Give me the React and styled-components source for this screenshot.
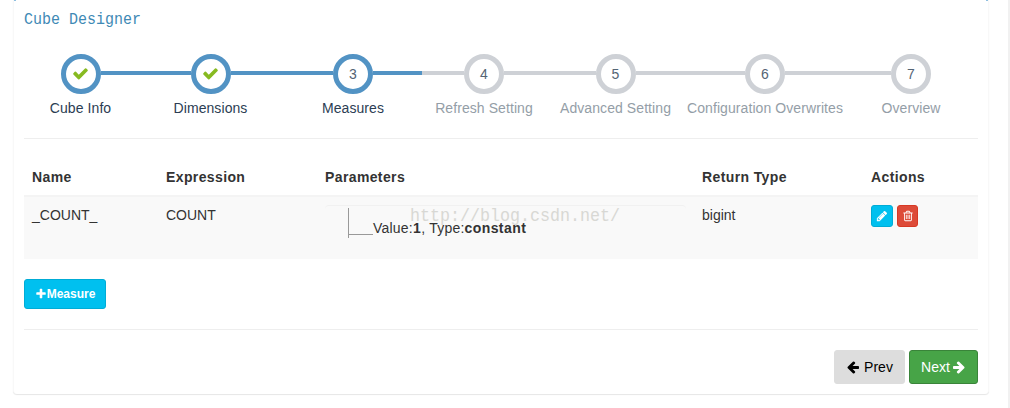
import React from "react";
import styled, { createGlobalStyle } from "styled-components";

const GlobalStyle = createGlobalStyle`
    * {
        box-sizing: border-box;
    }

    body {
        margin: 0;
        background: #fff;
        color: #333;
        font-family: "Liberation Sans", Arial, sans-serif;
        font-size: 14px;
        line-height: 20px;
    }
`;

const Page = styled.div`
    width: 1010px;
    height: 408px;
    padding-left: 13px;
    border-right: 2px solid #f1f1f1;
    overflow: hidden;
`;

/* the blue top border only shows at its two corners */
const Box = styled.div`
    width: 976px;
    height: 394px;
    padding: 0 10px;
    background:
        linear-gradient(#8fbfe0, #8fbfe0) 0 0 / 2px 1px no-repeat,
        linear-gradient(#8fbfe0, #8fbfe0) 100% 0 / 2px 1px no-repeat,
        #fff;
    border: solid #f8f8f8;
    border-width: 0 1px;
    border-radius: 0 0 4px 4px;
    box-shadow: 0 1px 1px rgba(0, 0, 0, 0.1);
`;

const Title = styled.h3`
    margin: 0;
    height: 54px;
    padding-top: 11px;
    color: #4089b5;
    font-family: "Liberation Mono", monospace;
    font-size: 15px;
    font-weight: 400;
    line-height: 20px;

    span {
        display: inline-block;
        transform: scaleY(1.15);
    }
`;

const Steps = styled.ul`
    display: grid;
    grid-template-columns: 113px 147px 138px 124px 139px 160px 132px;
    width: 954px;
    margin: 0;
    padding: 0;
    list-style: none;
`;

const Step = styled.li`
    display: flex;
    flex-direction: column;
    align-items: center;
    color: ${(props) => (props.$active ? "#2b3d53" : "#949ea7")};
    white-space: nowrap;
`;

const Track = styled.div`
    display: flex;
    align-items: center;
    width: 100%;
    height: 40px;
`;

const Line = styled.span`
    flex: 1;
    height: 4px;
    margin-bottom: 2px;
    background: ${(props) => (props.$hidden ? "transparent" : props.$active ? "#5293c4" : "#ced1d6")};
`;

const Circle = styled.span`
    display: flex;
    align-items: center;
    justify-content: center;
    width: 40px;
    height: 40px;
    border: 5px solid ${(props) => (props.$active ? "#5293c4" : "#ced1d6")};
    border-radius: 50%;
    background: #fff;
    color: #546474;
    font-size: 14px;

    svg {
        margin-bottom: 1px;
    }
`;

const StepLabel = styled.span`
    margin-top: 4px;
    letter-spacing: 0.08px;
`;

const Divider = styled.hr`
    height: 1px;
    margin: 20px 0;
    border: 0;
    background: #eee;
`;

const Table = styled.table`
    width: 954px;
    border-spacing: 0;
    table-layout: fixed;
    margin-bottom: 20px;
`;

const Th = styled.th`
    width: ${(props) => props.$width}px;
    height: 38px;
    padding: 8px;
    border-bottom: 2px solid #f4f4f4;
    text-align: left;
    letter-spacing: 0.38px;
`;

const Td = styled.td`
    height: 62px;
    padding: 8px;
    background: #f9f9f9;
    vertical-align: top;
`;

const Params = styled.div`
    display: flex;
    position: relative;
    width: 361px;
    height: 46px;
    padding: 3px 0 0 23px;
    border-top: 1px solid #f1f1f1;
    border-radius: 4px;
`;

const Branch = styled.span`
    width: 25px;
    height: 30px;
    margin-top: -1px;
    border-left: 1px solid #999;

    &::after {
        content: "";
        display: block;
        height: 26px;
        border-bottom: 1px solid #999;
    }
`;

const ParamText = styled.span`
    padding-top: 9px;
    letter-spacing: 0.22px;
    white-space: pre;

    b {
        letter-spacing: 0.42px;
    }
`;

const Watermark = styled.span`
    position: absolute;
    top: 0;
    left: 85px;
    color: #d8d8d4;
    font-family: "Liberation Mono", monospace;
    font-size: 16.67px;
    white-space: nowrap;
    transform: scaleY(1.15);
`;

const Actions = styled.div`
    display: flex;
    gap: 4px;
`;

const Button = styled.button`
    display: flex;
    align-items: center;
    justify-content: center;
    gap: ${(props) => props.$gap || 0}px;
    width: ${(props) => props.$width}px;
    height: ${(props) => props.$height}px;
    padding: 0;
    border: 1px solid ${(props) => props.$border};
    border-radius: 3px;
    background: ${(props) => props.$bg};
    color: ${(props) => props.$color || "#fff"};
    font-family: inherit;
    font-size: ${(props) => props.$size || 14}px;
    font-weight: ${(props) => props.$weight || 400};
`;

const Footer = styled.div`
    display: flex;
    justify-content: flex-end;
    gap: 4px;
`;

const Svg = styled.svg`
    display: block;
    flex: none;
    fill: ${(props) => props.$color || "currentColor"};
`;

const paths = {
    check: "M1671 566q0 40-28 68l-724 724-136 136q-28 28-68 28t-68-28l-136-136-362-362q-28-28-28-68t28-68l136-136q28-28 68-28t68 28l294 295 656-657q28-28 68-28t68 28l136 136q28 28 28 68z",
    plus: "M1600 736v192q0 40-28 68t-68 28h-416v416q0 40-28 68t-68 28h-192q-40 0-68-28t-28-68v-416h-416q-40 0-68-28t-28-68v-192q0-40 28-68t68-28h416v-416q0-40 28-68t68-28h192q40 0 68 28t28 68v416h416q40 0 68 28t28 68z",
    arrow: "M1664 896v128q0 53-32.5 90.5t-84.5 37.5h-704l293 294q38 36 38 90t-38 90l-75 76q-37 37-90 37-52 0-91-37l-651-652q-37-37-37-90 0-52 37-91l651-650q38-38 91-38 52 0 90 38l75 74q38 38 38 91t-38 91l-293 293h704q52 0 84.5 37.5t32.5 90.5z",
    pencil: "M491 1536l91-91-235-235-91 91v107h128v128h107zm523-928q0-22-22-22-10 0-17 7l-542 542q-7 7-7 17 0 22 22 22 10 0 17-7l542-542q7-7 7-17zm-54-192l416 416-832 832h-416v-416zm683 96q0 53-37 90l-166 166-416-416 166-165q36-38 90-38 53 0 91 38l235 234q37 39 37 91z",
    trash: "M704 736v576q0 14-9 23t-23 9h-64q-14 0-23-9t-9-23v-576q0-14 9-23t23-9h64q14 0 23 9t9 23zm256 0v576q0 14-9 23t-23 9h-64q-14 0-23-9t-9-23v-576q0-14 9-23t23-9h64q14 0 23 9t9 23zm256 0v576q0 14-9 23t-23 9h-64q-14 0-23-9t-9-23v-576q0-14 9-23t23-9h64q14 0 23 9t9 23zm128 724v-948h-896v948q0 22 7 40.5t14.5 27 10.5 8.5h832q3 0 10.5-8.5t14.5-27 7-40.5zm-672-1076h448l-48-117q-7-9-17-11h-317q-10 2-17 11zm928 32v64q0 14-9 23t-23 9h-96v948q0 83-47 143.5t-113 60.5h-832q-66 0-113-58.5t-47-141.5v-952h-96q-14 0-23-9t-9-23v-64q0-14 9-23t23-9h309l70-167q15-37 54-63t79-26h320q40 0 79 26t54 63l70 167h309q14 0 23 9t9 23z",
};

const Icon = ({ name, size, color, flip }) => (
    <Svg width={size} height={size} viewBox="0 0 1792 1792" $color={color} aria-hidden="true">
        <path d={paths[name]} transform={flip ? "translate(1792 0) scale(-1 1)" : undefined} />
    </Svg>
);

const steps = [
    "Cube Info",
    "Dimensions",
    "Measures",
    "Refresh Setting",
    "Advanced Setting",
    "Configuration Overwrites",
    "Overview",
];

const columns = [
    ["Name", 134],
    ["Expression", 159],
    ["Parameters", 377],
    ["Return Type", 169],
    ["Actions", 115],
];

const current = 2;

const App = () => (
    <Page>
        <GlobalStyle />
        <Box>
            <Title><span>Cube Designer</span></Title>
            <Steps>
                {steps.map((label, i) => (
                    <Step key={label} $active={i <= current}>
                        <Track>
                            <Line $active={i <= current} $hidden={i === 0} />
                            <Circle $active={i <= current}>
                                {i < current ? <Icon name="check" size={17} color="#87ba21" /> : i + 1}
                            </Circle>
                            <Line $active={i <= current} $hidden={i === steps.length - 1} />
                        </Track>
                        <StepLabel>{label}</StepLabel>
                    </Step>
                ))}
            </Steps>
            <Divider />
            <Table>
                <thead>
                    <tr>
                        {columns.map(([name, width]) => (
                            <Th key={name} $width={width}>{name}</Th>
                        ))}
                    </tr>
                </thead>
                <tbody>
                    <tr>
                        <Td>_COUNT_</Td>
                        <Td>COUNT</Td>
                        <Td>
                            <Params>
                                <Branch />
                                <ParamText>Value:<b>1</b>, Type:<b>constant</b></ParamText>
                                <Watermark>http://blog.csdn.net/</Watermark>
                            </Params>
                        </Td>
                        <Td>bigint</Td>
                        <Td>
                            <Actions>
                                <Button $width={22} $height={22} $bg="#00c0ef" $border="#00acd6" aria-label="Edit">
                                    <Icon name="pencil" size={12} />
                                </Button>
                                <Button $width={21} $height={22} $bg="#dd4b39" $border="#d73925" aria-label="Delete">
                                    <Icon name="trash" size={12} />
                                </Button>
                            </Actions>
                        </Td>
                    </tr>
                </tbody>
            </Table>
            <Button $width={82} $height={30} $bg="#00c0ef" $border="#00acd6" $size={12} $weight={700} $gap={0}>
                <Icon name="plus" size={12} />
                Measure
            </Button>
            <Divider />
            <Footer>
                <Button $width={71} $height={34} $bg="#ddd" $border="#ddd" $color="#000" $gap={4}>
                    <Icon name="arrow" size={14} />
                    Prev
                </Button>
                <Button $width={69} $height={34} $bg="#47a447" $border="#398439" $gap={2}>
                    Next
                    <Icon name="arrow" size={14} flip />
                </Button>
            </Footer>
        </Box>
    </Page>
);

export default App;
